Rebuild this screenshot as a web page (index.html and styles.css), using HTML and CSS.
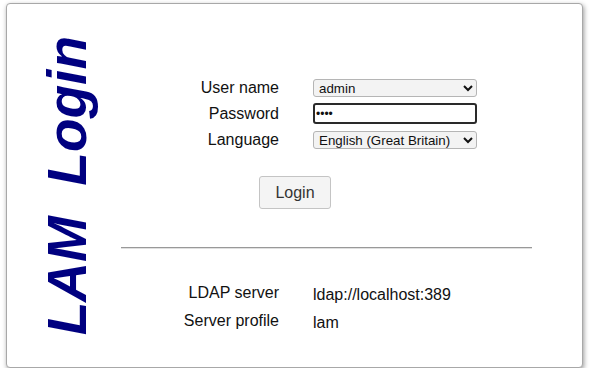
FILE: index.html
```html
<!DOCTYPE html>
<html lang="en">
<head>
    <meta charset="UTF-8">
    <title>LAM Login</title>
    <link rel="stylesheet" href="styles.css">
</head>
<body>
    <div class="login-box">
        <!-- vertical title -->
        <div class="side">
            <div class="side-title">LAM&nbsp;&nbsp;Login</div>
        </div>

        <div class="main">
            <form class="login-form">
                <label class="label" for="user">User name</label>
                <select id="user" class="field">
                    <option>admin</option>
                </select>
                <label class="label" for="pass">Password</label>
                <input type="password" id="pass" class="field field-pass" value="1234">
                <label class="label row-lang" for="lang">Language</label>
                <select id="lang" class="field row-lang">
                    <option>English (Great Britain)</option>
                </select>
            </form>

            <div class="actions">
                <button type="button" class="btn">Login</button>
            </div>

            <hr class="sep">

            <!-- server info -->
            <div class="info">
                <div class="label">LDAP server</div>
                <div class="value">ldap://localhost:389</div>
                <div class="label">Server profile</div>
                <div class="value">lam</div>
            </div>
        </div>
    </div>
</body>
</html>
```

FILE: styles.css
```css
body {
    margin: 0;
    background-color: #fff;
    font-family: "Liberation Sans", Arial, sans-serif;
    color: #111;
}
.login-box {
    display: flex;
    box-sizing: border-box;
    width: 577px;
    height: 365px;
    margin: 3px 0 0 6px;
    border: 1px solid #a8a8a8;
    border-radius: 4px;
    box-shadow: 1px 2px 5px #999;
    background-color: #fff;
}
.side {
    width: 114px;
    display: flex;
    align-items: center;
    justify-content: center;
}
.side-title {
    writing-mode: vertical-rl;
    transform: rotate(180deg);
    font-size: 55px;
    font-weight: bold;
    font-style: italic;
    line-height: 1;
    color: #000080;
    white-space: nowrap;
    margin-left: 6px;
}
.main {
    flex: 1;
    padding-top: 75px;
}
.login-form {
    display: grid;
    grid-template-columns: 158px 164px;
    column-gap: 34px;
    row-gap: 6px;
    align-items: center;
}
.row-lang {
    margin-top: 1px;
}
.label {
    text-align: right;
    font-size: 16px;
    line-height: 18px;
}
.field {
    box-sizing: border-box;
    width: 164px;
    height: 18px;
    font-family: "Liberation Sans", Arial, sans-serif;
    font-size: 13.33px;
    color: #111;
    background-color: #f3f3f3;
    border: 1px solid #b5b5b5;
    border-radius: 3px;
    padding: 0 1px;
}
.field-pass {
    height: 21px;
    background-color: #fff;
    border: 2px solid #2a2a2a;
    font-size: 12px;
}
.actions {
    margin-top: 27px;
    padding-left: 138px;
}
.btn {
    box-sizing: border-box;
    width: 72px;
    height: 33px;
    font-family: "Liberation Sans", Arial, sans-serif;
    font-size: 16px;
    color: #333;
    background-color: #f4f4f4;
    border: 1px solid #c4c4c4;
    border-radius: 3px;
}
.sep {
    width: 411px;
    margin: 38px 0 0 0;
    border: 0;
    border-top: 1px solid #999;
    border-bottom: 1px solid #e0e0e0;
}
.info {
    display: grid;
    grid-template-columns: 158px auto;
    column-gap: 34px;
    row-gap: 8px;
    margin-top: 35px;
}
.value {
    font-size: 16px;
    line-height: 18px;
    padding-top: 2px;
}
```
